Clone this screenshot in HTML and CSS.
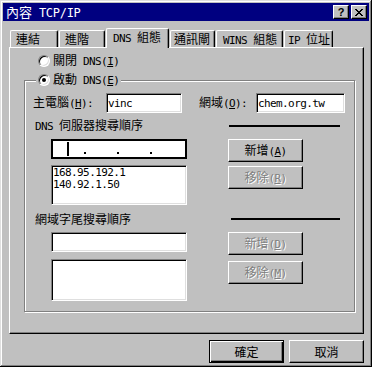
FILE: index.html
```html
<!DOCTYPE html>
<html lang="zh-Hant">
<head>
    <meta charset="UTF-8">
    <title>內容 TCP/IP</title>
    <link rel="stylesheet" href="styles.css">
</head>
<body>
    <div class="window">
        <!-- Title bar -->
        <div class="titlebar">
            <span class="title">內容<span class="en"> TCP/IP</span></span>
            <div class="caption-buttons">
                <span class="cap-btn">?</span>
                <span class="cap-btn">
                    <svg width="8" height="7" viewBox="0 0 8 7" shape-rendering="crispEdges">
                        <path d="M0 0h2v1H0z M6 0h2v1H6z M1 1h2v1H1z M5 1h2v1H5z M2 2h4v1H2z M3 3h2v1H3z M2 4h4v1H2z M1 5h2v1H1z M5 5h2v1H5z M0 6h2v1H0z M6 6h2v1H6z" fill="#000"/>
                    </svg>
                </span>
            </div>
        </div>

        <div class="sheet">
            <!-- Tabs -->
            <div class="tabs">
                <div class="tab tab-link">連結</div>
                <div class="tab tab-adv">進階</div>
                <div class="tab tab-dns active"><span class="en">DNS </span>組態</div>
                <div class="tab tab-gw">通訊閘</div>
                <div class="tab tab-wins"><span class="en">WINS </span>組態</div>
                <div class="tab tab-ip"><span class="en">IP </span>位址</div>
            </div>

            <div class="panel">
                <div class="option">
                    <span class="radio"></span>
                    <span>關閉<span class="en"> DNS(<u>I</u>)</span></span>
                </div>

                <fieldset class="group">
                    <legend>
                        <span class="option-inline">
                            <span class="radio checked"></span>
                            <span>啟動<span class="en"> DNS(<u>E</u>)</span></span>
                        </span>
                    </legend>

                    <div class="group-body">
                        <div class="host-row">
                            <span class="host-label">主電腦<span class="en">(<u>H</u>):</span></span>
                            <input class="field text-field host-input" type="text" value="vinc">
                            <span class="domain-label">網域<span class="en">(<u>O</u>):</span></span>
                            <input class="field text-field domain-input" type="text" value="chem.org.tw">
                        </div>

                        <!-- DNS server search order -->
                        <div class="order-row">
                            <span class="order-label"><span class="en">DNS </span>伺服器搜尋順序</span>
                            <span class="rule"></span>
                        </div>
                        <div class="list-block">
                            <div class="list-col">
                                <div class="field ip-field">
                                    <span class="octet first"><span class="caret"></span></span>
                                    <span class="dot"></span>
                                    <span class="octet"></span>
                                    <span class="dot"></span>
                                    <span class="octet"></span>
                                    <span class="dot"></span>
                                    <span class="octet"></span>
                                </div>
                                <div class="field listbox">
                                    <div>168.95.192.1</div>
                                    <div>140.92.1.50</div>
                                </div>
                            </div>
                            <div class="btn-col">
                                <button class="btn">新增<span class="en">(<u>A</u>)</span></button>
                                <button class="btn" disabled>移除<span class="en">(<u>R</u>)</span></button>
                            </div>
                        </div>

                        <!-- Domain suffix search order -->
                        <div class="order-row suffix-row">
                            <span class="order-label">網域字尾搜尋順序</span>
                            <span class="rule"></span>
                        </div>
                        <div class="list-block suffix-block">
                            <div class="list-col">
                                <input class="field text-field" type="text" value="">
                                <div class="field listbox"></div>
                            </div>
                            <div class="btn-col">
                                <button class="btn" disabled>新增<span class="en">(<u>D</u>)</span></button>
                                <button class="btn" disabled>移除<span class="en">(<u>M</u>)</span></button>
                            </div>
                        </div>
                    </div>
                </fieldset>
            </div>

            <div class="dialog-buttons">
                <button class="btn default">確定</button>
                <button class="btn">取消</button>
            </div>
        </div>
    </div>
</body>
</html>
```

FILE: styles.css
```css
* {
    margin: 0;
    padding: 0;
    box-sizing: border-box;
}

body {
    font-family: "Noto Sans CJK TC", sans-serif;
    font-size: 12px;
    line-height: 16px;
    color: #000;
    background-color: #c0c0c0;
}

/* latin text, half width like the old bitmap font */
.en {
    font-family: "DejaVu Sans Mono", monospace;
    font-size: 11px;
    letter-spacing: -0.6px;
}

.window {
    width: 372px;
    height: 367px;
    padding: 3px;
    background-color: #c0c0c0;
    box-shadow: inset -1px -1px #000, inset 1px 1px #dfdfdf, inset -2px -2px #808080, inset 2px 2px #fff;
}

.titlebar {
    height: 18px;
    display: flex;
    align-items: center;
    justify-content: space-between;
    padding: 0 2px 0 3px;
    background-color: #000080;
    color: #fff;
}

.title {
    font-size: 13px;
    line-height: 18px;
    white-space: nowrap;
}

.title .en {
    font-size: 12px;
    letter-spacing: -0.3px;
}

.caption-buttons {
    display: flex;
    gap: 2px;
}

.cap-btn {
    width: 16px;
    height: 14px;
    display: flex;
    align-items: center;
    justify-content: center;
    background-color: #c0c0c0;
    color: #000;
    border: 1px solid;
    border-color: #fff #000 #000 #fff;
    box-shadow: inset -1px -1px #808080;
    font-family: "Liberation Sans", sans-serif;
    font-weight: bold;
    font-size: 11px;
    line-height: 12px;
}

.sheet {
    padding: 7px 5px 0 6px;
}

/* tabs */
.tabs {
    display: flex;
    align-items: flex-end;
    gap: 1px;
    height: 19px;
    padding-left: 1px;
}

.tab {
    height: 17px;
    padding-left: 5px;
    border: 1px solid;
    border-bottom: none;
    border-color: #fff #000 #000 #fff;
    border-radius: 2px 2px 0 0;
    box-shadow: inset -1px 0 #808080;
    line-height: 15px;
    white-space: nowrap;
    overflow: hidden;
}

.tab.active {
    position: relative;
    z-index: 1;
    height: 20px;
    margin-bottom: -1px;
    padding-left: 6px;
    line-height: 16px;
    background-color: #c0c0c0;
}

.tab-link { width: 48px; }
.tab-adv { width: 46px; }
.tab-dns { width: 63px; }
.tab-gw { width: 45px; padding-left: 3px; }
.tab-wins { width: 67px; padding-left: 6px; }
.tab-ip { width: 49px; padding-left: 3px; }

.panel {
    height: 287px;
    padding: 5px 8px 0 14px;
    border: 1px solid;
    border-color: #fff #000 #000 #fff;
    box-shadow: inset -1px -1px #808080;
}

/* radio buttons */
.option,
.option-inline {
    display: flex;
    align-items: center;
    gap: 3px;
    height: 16px;
    white-space: nowrap;
}

.option {
    margin-left: 14px;
}

.radio {
    position: relative;
    width: 12px;
    height: 12px;
    flex: none;
    border-radius: 50%;
    background-color: #fff;
    border: 1px solid;
    border-color: #808080 #fff #fff #808080;
    box-shadow: inset 1px 1px #000, inset -1px -1px #dfdfdf;
}

.radio.checked::after {
    content: "";
    position: absolute;
    left: 3px;
    top: 3px;
    width: 4px;
    height: 4px;
    border-radius: 50%;
    background-color: #000;
}

/* group box */
.group {
    margin-top: 3px;
    padding: 0;
    border: 1px solid #808080;
    box-shadow: 1px 1px #fff, inset 1px 1px #fff;
}

.group legend {
    margin-left: 11px;
    padding: 0 2px;
    background-color: #c0c0c0;
}

.group-body {
    padding: 5px 0 10px 8px;
}

.host-row {
    display: flex;
    align-items: center;
    height: 20px;
    white-space: nowrap;
}

.host-label { width: 73px; }
.host-input { width: 76px; }
.domain-label { width: 57px; margin-left: 17px; }
.domain-input { width: 89px; }

/* sunken edit / list boxes */
.field {
    background-color: #fff;
    border: 1px solid;
    border-color: #808080 #fff #fff #808080;
    box-shadow: inset 1px 1px #000, inset -1px -1px #dfdfdf;
}

.text-field {
    height: 20px;
    padding: 0 1px;
    font-family: "DejaVu Sans Mono", monospace;
    font-size: 11px;
    letter-spacing: -0.6px;
    color: #000;
    outline: none;
}

.order-row {
    display: flex;
    align-items: center;
    height: 16px;
    margin-top: 5px;
    padding-left: 2px;
    white-space: nowrap;
}

.order-label { width: 194px; }

.rule {
    width: 111px;
    height: 2px;
    background-color: #000;
}

.suffix-row { margin-top: 6px; }
.suffix-row .order-label { width: 196px; }
.suffix-row .rule { width: 109px; }

.list-block {
    display: flex;
    align-items: flex-start;
    margin-top: 5px;
    padding-left: 18px;
}

.list-col {
    width: 136px;
    display: flex;
    flex-direction: column;
    gap: 6px;
}

.btn-col {
    display: flex;
    flex-direction: column;
    gap: 4px;
    margin-left: 41px;
}

.suffix-block .list-col { gap: 7px; }
.suffix-block .btn-col { gap: 6px; }

.ip-field {
    height: 20px;
    display: flex;
    align-items: center;
    padding-left: 1px;
    border-color: #000;
    box-shadow: inset 1px 1px #000, inset -1px -1px #000;
}

.octet {
    width: 31px;
    height: 14px;
}

.octet.first {
    padding-left: 14px;
}

.caret {
    display: block;
    width: 2px;
    height: 14px;
    background-color: #000;
}

.dot {
    align-self: flex-end;
    width: 2px;
    height: 2px;
    margin-bottom: 4px;
    background-color: #000;
}

.listbox {
    height: 40px;
    padding: 1px 0 0 1px;
    font-family: "DejaVu Sans Mono", monospace;
    font-size: 11px;
    letter-spacing: -0.6px;
    line-height: 12px;
}

.suffix-block .listbox { height: 42px; }

/* push buttons */
.btn {
    width: 75px;
    height: 23px;
    padding: 0;
    font-family: inherit;
    font-size: 12px;
    line-height: 16px;
    color: #000;
    background-color: #c0c0c0;
    border: 1px solid;
    border-color: #fff #000 #000 #fff;
    box-shadow: inset -1px -1px #808080;
    white-space: nowrap;
}

.btn:disabled {
    color: #808080;
    text-shadow: 1px 1px #fff;
}

.btn.default {
    border-color: #000;
    box-shadow: inset 1px 1px #fff, inset -1px -1px #000, inset -2px -2px #808080;
}

.dialog-buttons {
    display: flex;
    justify-content: flex-end;
    gap: 5px;
    margin-top: 6px;
}
```
